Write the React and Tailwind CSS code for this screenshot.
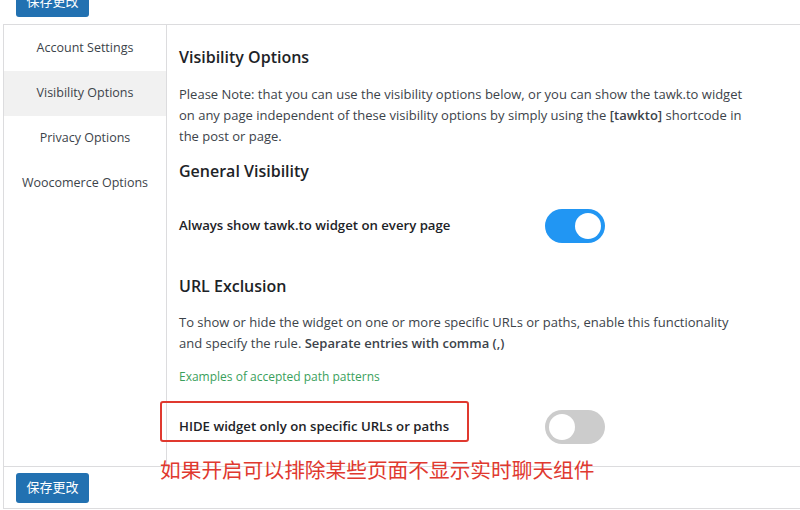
import React from "react";

const font = { fontFamily: '"Open Sans", "Noto Sans CJK SC", sans-serif' };

const Toggle = ({ on }) => (
  <div
    className={`relative w-[60px] h-[34px] rounded-full ${
      on ? "bg-[#2196f3]" : "bg-[#cccccc]"
    }`}
  >
    <div
      className={`absolute top-[4px] w-[26px] h-[26px] rounded-full bg-white ${
        on ? "left-[30px]" : "left-[4px]"
      }`}
    />
  </div>
);

const SaveButton = ({ className = "" }) => (
  <button
    className={`block bg-[#2271b1] text-white text-[13px] rounded-[3px] w-[73px] h-[30px] ${className}`}
  >
    保存更改
  </button>
);

const tabs = [
  "Account Settings",
  "Visibility Options",
  "Privacy Options",
  "Woocomerce Options",
];

export default function App() {
  return (
    <div
      className="relative w-[800px] h-[510px] bg-white overflow-hidden text-[#3c434a]"
      style={font}
    >
      {/* Top save button, cut off by the viewport */}
      <div className="flex items-start h-[24px] pl-[16px]">
        <SaveButton className="-mt-[13px]" />
      </div>

      <div className="ml-[3px] border-t border-l border-b border-[#dcdcde] h-[485px] flex flex-col">
        <div className="flex flex-1">
          {/* Sidebar */}
          <div className="w-[163px] border-r border-[#dcdcde] pt-[1px]">
            {tabs.map((t) => (
              <div
                key={t}
                className={`h-[45px] flex items-center justify-center text-[12.5px] ${
                  t === "Visibility Options" ? "bg-[#f1f1f1]" : ""
                }`}
              >
                {t}
              </div>
            ))}
          </div>

          {/* Content */}
          <div className="flex-1 pl-[12px] relative">
            <h2 className="text-[16px] font-semibold text-[#1d2327] mt-[20px] leading-[24px]">
              Visibility Options
            </h2>
            <p className="text-[13px] leading-[21px] mt-[15px] max-w-[575px]">
              Please Note: that you can use the visibility options below, or you
              can show the tawk.to widget on any page independent of these
              visibility options by simply using the{" "}
              <b className="font-semibold">[tawkto]</b> shortcode in the post or
              page.
            </p>
            <h3 className="text-[16px] font-semibold text-[#1d2327] mt-[12px] leading-[24px]">
              General Visibility
            </h3>

            <div className="flex items-center mt-[26px] w-[426px] justify-between">
              <span className="text-[13.2px] font-semibold text-[#1d2327]">
                Always show tawk.to widget on every page
              </span>
              <Toggle on />
            </div>

            <h3 className="text-[16px] font-semibold text-[#1d2327] mt-[31px] leading-[24px]">
              URL Exclusion
            </h3>
            <p className="text-[13px] leading-[21px] mt-[14px] max-w-[573px]">
              To show or hide the widget on one or more specific URLs or paths,
              enable this functionality and specify the rule.{" "}
              <b className="font-semibold">Separate entries with comma (,)</b>
            </p>
            <div className="text-[12px] text-[#3a9f5c] mt-[14px]">
              Examples of accepted path patterns
            </div>

            <div className="flex items-center mt-[24px] w-[426px] justify-between">
              <span className="text-[13.2px] font-semibold text-[#1d2327]">
                HIDE widget only on specific URLs or paths
              </span>
              <Toggle />
            </div>

            {/* Annotation box */}
            <div className="absolute left-[-7px] top-[376px] w-[309px] h-[41px] border-2 border-[#e0392f] rounded-[3px]" />
          </div>
        </div>

        {/* Footer */}
        <div className="border-t border-[#dcdcde] h-[42px] pl-[12px] pt-[6px]">
          <SaveButton />
        </div>
      </div>

      {/* Annotation text */}
      <div
        className="absolute left-[160px] top-[455px] text-[20.7px] leading-[28px] text-[#e0392f]"
        style={{ fontFamily: '"Noto Sans CJK SC", sans-serif' }}
      >
        如果开启可以排除某些页面不显示实时聊天组件
      </div>
    </div>
  );
}
